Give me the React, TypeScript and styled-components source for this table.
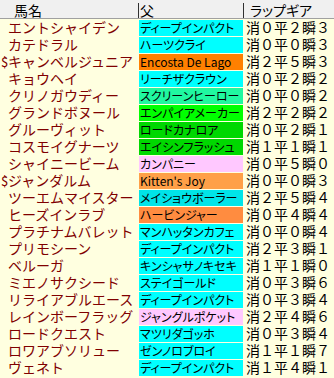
import React from "react";
import styled, { createGlobalStyle } from "styled-components";

const Global = createGlobalStyle`
  html, body { margin: 0; padding: 0; background: #ffffe0; }
  body { font-family: "Noto Sans CJK JP", "Noto Sans", sans-serif; }
`;

type Row = { name: string; foreign?: boolean; sire: string; color: string; gear: string };

const CYAN = "#00ffff";
const rows: Row[] = [
  { name: "エントシャイデン", sire: "ディープインパクト", color: CYAN, gear: "消０平２瞬３" },
  { name: "カテドラル", sire: "ハーツクライ", color: CYAN, gear: "消０平０瞬３" },
  { name: "キャンベルジュニア", foreign: true, sire: "Encosta De Lago", color: "#ff8000", gear: "消２平５瞬３" },
  { name: "キョウヘイ", sire: "リーチザクラウン", color: CYAN, gear: "消０平２瞬２" },
  { name: "クリノガウディー", sire: "スクリーンヒーロー", color: "#20f8a0", gear: "消０平０瞬２" },
  { name: "グランドボヌール", sire: "エンパイアメーカー", color: "#00ff00", gear: "消２平２瞬２" },
  { name: "グルーヴィット", sire: "ロードカナロア", color: "#00d800", gear: "消０平２瞬１" },
  { name: "コスモイグナーツ", sire: "エイシンフラッシュ", color: "#00d800", gear: "消１平１瞬１" },
  { name: "シャイニービーム", sire: "カンパニー", color: "#ffc8ff", gear: "消０平５瞬０" },
  { name: "ジャンダルム", foreign: true, sire: "Kitten's Joy", color: "#ffa048", gear: "消０平０瞬３" },
  { name: "ツーエムマイスター", sire: "メイショウボーラー", color: "#00e4e8", gear: "消２平５瞬４" },
  { name: "ヒーズインラブ", sire: "ハービンジャー", color: "#ff8c40", gear: "消０平４瞬４" },
  { name: "プラチナムバレット", sire: "マンハッタンカフェ", color: CYAN, gear: "消０平０瞬４" },
  { name: "プリモシーン", sire: "ディープインパクト", color: CYAN, gear: "消２平３瞬１" },
  { name: "ベルーガ", sire: "キンシャサノキセキ", color: CYAN, gear: "消１平１瞬０" },
  { name: "ミエノサクシード", sire: "ステイゴールド", color: CYAN, gear: "消０平３瞬６" },
  { name: "リライアブルエース", sire: "ディープインパクト", color: CYAN, gear: "消０平３瞬４" },
  { name: "レインボーフラッグ", sire: "ジャングルポケット", color: "#ffc8ff", gear: "消２平４瞬６" },
  { name: "ロードクエスト", sire: "マツリダゴッホ", color: CYAN, gear: "消０平３瞬４" },
  { name: "ロワアブソリュー", sire: "ゼンノロブロイ", color: CYAN, gear: "消１平１瞬７" },
  { name: "ヴェネト", sire: "ディープインパクト", color: CYAN, gear: "消１平４瞬１" },
];

const Table = styled.div`
  width: 334px;
`;

const Header = styled.div`
  display: grid;
  grid-template-columns: 138px 105px 1fr;
  height: 18px;
  background: #f0f0f0;
  border-bottom: 1px solid #a0a0a0;
`;

const HeadCell = styled.div<{ $sep?: boolean; $pad: number }>`
  margin-top: 3px;
  height: 15px;
  line-height: 15px;
  padding-left: ${(p) => p.$pad}px;
  border-left: ${(p) => (p.$sep ? "1px solid #303030" : "none")};
  font-size: 14px;
  color: #000;
  font-feature-settings: "palt";
  white-space: nowrap;
`;

const DataRow = styled.div`
  display: grid;
  grid-template-columns: 139px 104px 1fr;
  height: 17px;
`;

const NameCell = styled.div`
  padding-left: 1px;
  font-size: 14px;
  line-height: 17px;
  color: #800000;
  white-space: nowrap;
`;

const Marker = styled.span`
  display: inline-block;
  width: 7px;
  font-size: 13px;
`;

const SireCell = styled.div<{ $bg: string }>`
  margin-top: 1px;
  height: 16px;
  line-height: 16px;
  background: ${(p) => p.$bg};
  padding-left: 1px;
  font-size: 12px;
  color: #000;
  font-feature-settings: "palt";
  white-space: nowrap;
`;

const GearCell = styled.div`
  padding-left: 3px;
  font-size: 14px;
  line-height: 17px;
  color: #000;
  white-space: nowrap;
`;

export default function App() {
  return (
    <>
      <Global />
      <Table>
        <Header>
          <HeadCell $pad={14}>馬名</HeadCell>
          <HeadCell $sep $pad={1}>父</HeadCell>
          <HeadCell $sep $pad={6}>ラップギア</HeadCell>
        </Header>
        {rows.map((r) => (
          <DataRow key={r.name}>
            <NameCell>
              <Marker>{r.foreign ? "$" : ""}</Marker>
              {r.name}
            </NameCell>
            <SireCell $bg={r.color}>{r.sire}</SireCell>
            <GearCell>{r.gear}</GearCell>
          </DataRow>
        ))}
      </Table>
    </>
  );
}
